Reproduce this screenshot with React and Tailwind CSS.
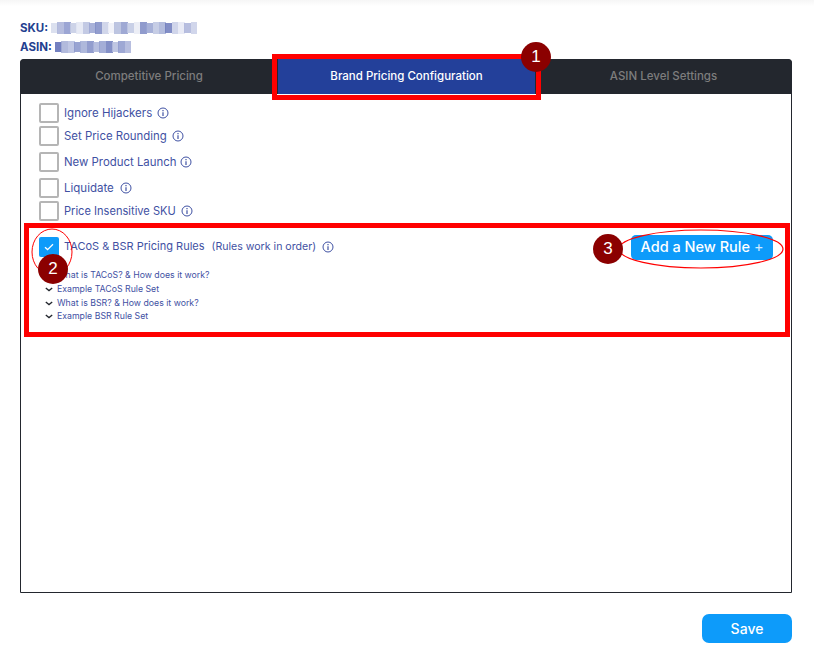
import React from "react";

const navy = "text-[#3f51a3]";

function Info() {
  return (
    <svg width="12" height="12" viewBox="0 0 12 12" fill="none" className="shrink-0">
      <circle cx="6" cy="6" r="5" stroke="#3f51a3" strokeWidth="1" />
      <path d="M6 5.3V9" stroke="#3f51a3" strokeWidth="1.2" />
      <path d="M6 3v1.2" stroke="#3f51a3" strokeWidth="1.2" />
    </svg>
  );
}

function Pixels({ width, colors }) {
  const n = colors.length;
  const w = width / n;
  return (
    <svg width={width} height="13" className="block" shapeRendering="crispEdges">
      {colors.map((c, i) => (
        <rect key={i} x={i * w} y={i % 3 === 0 ? 1 : 0} width={w + 0.5} height={i % 3 === 0 ? 10 : 12} fill={c} opacity={0.85} />
      ))}
    </svg>
  );
}

function Row({ label, gap, top, size = "text-[11.5px]" }) {
  return (
    <div className={`flex items-center ${top}`}>
      <span className="w-5 h-5 shrink-0 border-2 border-[#b5b5b5] rounded-[2px] bg-white" />
      <span className={`ml-[5px] ${size} leading-5 ${navy} -mt-[1px]`}>{label}</span>
      <span className={`${gap} -mt-[1px]`}><Info /></span>
    </div>
  );
}

function Chevron() {
  return (
    <svg width="8" height="5" viewBox="0 0 8 5" fill="none" className="shrink-0">
      <path d="M0.8 1l3.2 2.6L7.2 1" stroke="#23272e" strokeWidth="1.3" />
    </svg>
  );
}

function LinkRow({ label, h }) {
  return (
    <div className={`flex items-center ${h}`}>
      <Chevron />
      <span className={`ml-[4px] text-[8.75px] leading-none ${navy}`}>{label}</span>
    </div>
  );
}

function Badge({ n, className }) {
  return (
    <span className={`absolute w-[30px] h-[30px] rounded-full bg-[#8b0000] text-white text-[17px] leading-[30px] text-center ${className}`} style={{ fontFamily: '"Liberation Sans", sans-serif' }}>
      {n}
    </span>
  );
}

const sku = ["#d5daec","#a9b2d8","#8b97cc","#c4cbe4","#e3e6f3","#b9c1df","#9aa5d2","#7f8cc6","#c9cfe6","#eef0f8","#b2bbdc","#8e9acd","#c0c8e3","#e9ebf5","#7c89c4","#98a3d1","#bcc4e1","#a6b0d7","#6c7abc","#c8cee6","#e5e8f4","#aab3d9","#c9cfe7"];
const asin = ["#5a6ab5","#a4aed6","#b5bddf","#8794ca","#a0abd5","#7f8cc6","#a9b3d9","#94a0d0","#6f7dbd","#b4bcdd","#8d99cc","#aab3d9"];

export default function App() {
  return (
    <div className="relative w-[814px] h-[667px] bg-white overflow-hidden" style={{ fontFamily: 'Inter, "Liberation Sans", sans-serif' }}>
      <div className="h-[6px] bg-gradient-to-b from-[#f6f6f6] to-white" />
      <div className="pl-5 pr-[22px] pt-[15px]">
        <div className="flex items-center h-[15px] gap-[3px] text-[11.5px] font-bold text-[#23408f]">
          SKU: <Pixels width={146} colors={sku} />
        </div>
        <div className="flex items-center h-[15px] mt-1 gap-[3px] text-[11.5px] font-bold text-[#23408f]">
          ASIN: <Pixels width={76} colors={asin} />
        </div>

        <div className="mt-[4px] h-[534px] border border-[#23272e] rounded-t-[4px] flex flex-col">
          <div className="h-[35px] -mx-px -mt-px bg-[#23272e] rounded-t-[4px] flex text-[11.5px] font-medium text-[#7d7d7d] shrink-0">
            <div className="w-[258px] flex items-center justify-center">Competitive Pricing</div>
            <div className="w-[257px] bg-[#23409a] text-white flex items-center justify-center">Brand Pricing Configuration</div>
            <div className="flex-1 flex items-center justify-center">ASIN Level Settings</div>
          </div>

          <div className="pl-[18px] pr-[18px] pt-[9px]">
            <Row label="Ignore Hijackers" gap="ml-[5px]" top="" />
            <Row label="Set Price Rounding" gap="ml-[5px]" top="mt-[3px]" size="text-[11.4px]" />
            <Row label="New Product Launch" gap="ml-[4px]" top="mt-[6px]" size="text-[11.4px]" />
            <Row label="Liquidate" gap="ml-[6px]" top="mt-[6px]" />
            <Row label="Price Insensitive SKU" gap="ml-[5px]" top="mt-[3px]" size="text-[11.1px]" />

            <div className="flex items-center mt-4 h-5">
              <span className="w-5 h-5 shrink-0 rounded-[2px] bg-[#0d9bfa] flex items-center justify-center">
                <svg width="10" height="8" viewBox="0 0 10 8" fill="none">
                  <path d="M1 4.2l2.6 2.4L9 1.2" stroke="#fff" strokeWidth="1.3" />
                </svg>
              </span>
              <span className={`ml-[5px] text-[11px] ${navy} -mt-[1px]`}>TACoS &amp; BSR Pricing Rules</span>
              <span className={`ml-[7px] text-[10.6px] ${navy} -mt-[1px]`}>(Rules work in order)</span>
              <span className="ml-[6px] -mt-[1px]"><Info /></span>
              <button className="ml-auto mr-0 w-[142px] h-[25px] rounded-[5px] bg-[#0d9bfa] text-white text-[14.5px] font-medium leading-none">
                Add a New Rule <span className="font-normal text-[#cfe9fe]">+</span>
              </button>
            </div>

            <div className="mt-[11px] ml-[6px]">
              <LinkRow label="What is TACoS? & How does it work?" h="h-[14px]" />
              <LinkRow label="Example TACoS Rule Set" h="h-[14px]" />
              <LinkRow label="What is BSR? & How does it work?" h="h-[14px]" />
              <LinkRow label="Example BSR Rule Set" h="h-[13px]" />
            </div>
          </div>
        </div>

        <div className="flex justify-end mt-[21px]">
          <button className="w-[90px] h-[29px] rounded-[7px] bg-[#0d9bfa] text-white text-[14px] font-medium">Save</button>
        </div>
      </div>

      {/* annotations */}
      <div className="absolute left-[272px] top-[54px] w-[269px] h-[46px] border-[5px] border-[#ff0000]" />
      <div className="absolute left-[24px] top-[223px] w-[766px] h-[114px] border-[5px] border-[#ff0000]" />
      <svg className="absolute left-0 top-0 pointer-events-none" width="814" height="667" fill="none">
        <ellipse cx="52" cy="252" rx="20" ry="23" stroke="#ff0000" strokeWidth="1" />
        <ellipse cx="701" cy="249" rx="82" ry="19" stroke="#ff0000" strokeWidth="1.2" />
      </svg>
      <Badge n="1" className="left-[521px] top-[42px]" />
      <Badge n="2" className="left-[38px] top-[254px]" />
      <Badge n="3" className="left-[593px] top-[234px]" />
    </div>
  );
}
